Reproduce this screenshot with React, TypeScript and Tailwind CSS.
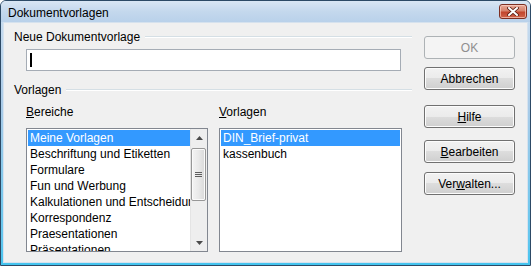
const bereiche = [
  "Meine Vorlagen",
  "Beschriftung und Etiketten",
  "Formulare",
  "Fun und Werbung",
  "Kalkulationen und Entscheidungen",
  "Korrespondenz",
  "Praesentationen",
  "Präsentationen",
];

const vorlagen = ["DIN_Brief-privat", "kassenbuch"];

function GroupHeader({ label }: { label: string }) {
  return (
    <div className="flex h-[14px] items-center">
      <span className="leading-[14px] text-black">{label}</span>
      <div className="ml-[5px] h-[2px] flex-1 border-t border-b border-t-[#d5dfe5] border-b-white" />
    </div>
  );
}

function Btn({
  children,
  disabled,
  className = "",
}: {
  children: React.ReactNode;
  disabled?: boolean;
  className?: string;
}) {
  return (
    <div
      className={`flex h-[23px] w-[91px] items-center justify-center rounded-[3px] border leading-[14px] ${
        disabled
          ? "border-[#adb2b5] bg-[#f4f4f4] text-[#8f8f8f]"
          : "border-[#707070] bg-[linear-gradient(180deg,#f2f2f2_0%,#ebebeb_50%,#dddddd_50%,#cfcfcf_100%)] text-black shadow-[inset_0_0_0_1px_#fcfcfc]"
      } ${className}`}
    >
      {children}
    </div>
  );
}

function ListItem({ text, selected }: { text: string; selected?: boolean }) {
  return (
    <div
      className={`h-[16px] whitespace-nowrap pl-[2px] leading-[16px] ${
        selected ? "bg-[#3399ff] text-white" : "text-black"
      }`}
    >
      {text}
    </div>
  );
}

function Scrollbar() {
  return (
    <div className="flex w-[17px] shrink-0 flex-col justify-between border-l border-l-[#e4e4e4] bg-[#eeeeee]">
      <div>
        <div className="flex h-[17px] items-center justify-center">
          <svg width="7" height="4" viewBox="0 0 7 4">
            <path d="M3.5 0 L7 4 L0 4 Z" fill="#4a4a4a" />
          </svg>
        </div>
        <div className="mr-[1px] mt-[2px] flex h-[53px] items-center justify-center rounded-[2px] border border-[#979797] bg-[linear-gradient(90deg,#f4f4f4_0%,#e9e9e9_50%,#d9d9d9_100%)] shadow-[inset_0_0_0_1px_#fafafa]">
          <div className="flex flex-col gap-[1px]">
            <div className="h-[1px] w-[7px] bg-[#5e5e5e]" />
            <div className="h-[1px] w-[7px] bg-[#5e5e5e]" />
            <div className="h-[1px] w-[7px] bg-[#5e5e5e]" />
          </div>
        </div>
      </div>
      <div className="flex h-[17px] items-center justify-center">
        <svg width="7" height="4" viewBox="0 0 7 4">
          <path d="M0 0 L7 0 L3.5 4 Z" fill="#4a4a4a" />
        </svg>
      </div>
    </div>
  );
}

export default function App() {
  return (
    <div className="h-[266px] w-[531px] font-['Liberation_Sans',Arial,sans-serif] text-[12px]">
      <div className="flex h-full w-full flex-col overflow-hidden rounded-t-[6px] border border-[#2d4a66] bg-[linear-gradient(180deg,#cddff1_0%,#a9cbe8_40%,#63c6ee_90%,#43c4ef_100%)]">
        {/* title bar */}
        <div className="flex h-[21px] shrink-0 items-start justify-between bg-[linear-gradient(180deg,#d9e6f4_0%,#c4d8ed_50%,#b9d1ea_100%)] pl-[7px] pr-[3px]">
          <span className="mt-[5px] leading-[14px] text-black">Dokumentvorlagen</span>
          <div className="mt-[3px] flex h-[15px] w-[28px] items-center justify-center rounded-[3px] border border-[#7d2f22] bg-[linear-gradient(180deg,#e9a897_0%,#d6826c_45%,#c2452d_55%,#d0644a_100%)] shadow-[inset_0_0_0_1px_rgba(255,220,210,0.6)]">
            <svg width="12" height="9" viewBox="0 0 12 9">
              <path
                d="M2 1 L10 8 M10 1 L2 8"
                stroke="#5a1d12"
                strokeWidth="3.6"
                strokeLinecap="square"
              />
              <path
                d="M2 1 L10 8 M10 1 L2 8"
                stroke="#ffffff"
                strokeWidth="2"
                strokeLinecap="square"
              />
            </svg>
          </div>
        </div>

        {/* body */}
        <div className="flex flex-1 px-[2px] pb-[2px]">
          <div className="flex flex-1 border border-[#d6e2ee] bg-[#f0f0f0]">
            {/* left column */}
            <div className="ml-[10px] flex w-[398px] flex-col">
              <div className="mt-[7px]">
                <GroupHeader label="Neue Dokumentvorlage" />
              </div>
              <div className="ml-[12px] mt-[5px] flex h-[22px] w-[375px] items-center border border-[#a5acb5] bg-white pl-[3px]">
                <div className="h-[14px] w-[2px] bg-black" />
              </div>
              <div className="mt-[12px]">
                <GroupHeader label="Vorlagen" />
              </div>
              <div className="ml-[12px] mt-[8px] flex gap-[11px]">
                <div className="flex w-[182px] flex-col">
                  <span className="h-[14px] leading-[14px] text-black">
                    <span className="underline">B</span>ereiche
                  </span>
                  <div className="mt-[9px] flex h-[124px] overflow-hidden border border-[#828790] bg-white">
                    <div className="min-w-0 flex-1 overflow-hidden pl-[1px] pt-[1px]">
                      {bereiche.map((b, i) => (
                        <ListItem key={b} text={b} selected={i === 0} />
                      ))}
                    </div>
                    <Scrollbar />
                  </div>
                </div>
                <div className="flex w-[183px] flex-col">
                  <span className="h-[14px] leading-[14px] text-black">
                    <span className="underline">V</span>orlagen
                  </span>
                  <div className="mt-[9px] h-[124px] overflow-hidden border border-[#828790] bg-white px-[1px] pt-[1px]">
                    {vorlagen.map((v, i) => (
                      <ListItem key={v} text={v} selected={i === 0} />
                    ))}
                  </div>
                </div>
              </div>
            </div>

            {/* buttons */}
            <div className="ml-[12px] flex flex-col">
              <Btn disabled className="mt-[13px]">OK</Btn>
              <Btn className="mt-[8px]">Abbrechen</Btn>
              <Btn className="mt-[15px]">
                <span className="underline">H</span>ilfe
              </Btn>
              <Btn className="mt-[12px]">
                <span className="underline">B</span>earbeiten
              </Btn>
              <Btn className="mt-[9px]">
                Ver<span className="underline">w</span>alten...
              </Btn>
            </div>
          </div>
        </div>
      </div>
    </div>
  );
}
